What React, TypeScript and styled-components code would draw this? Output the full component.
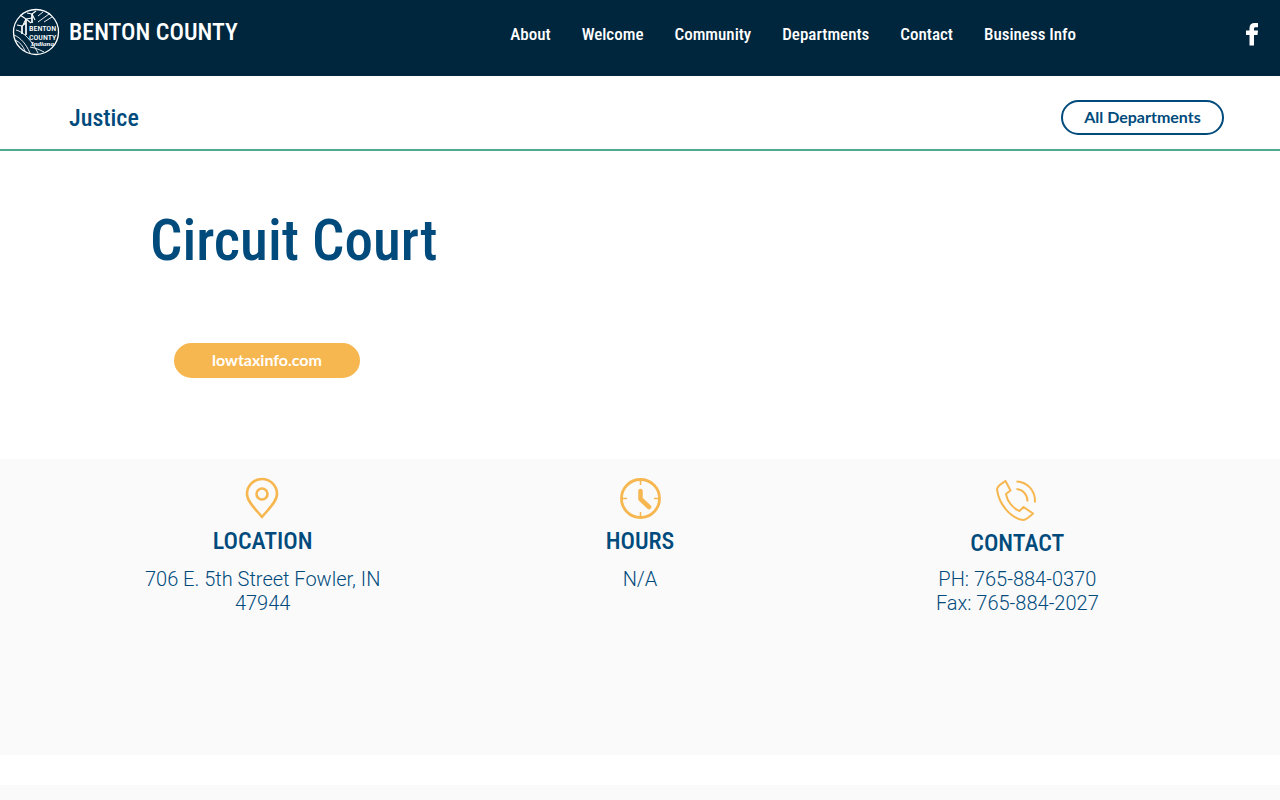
import React from "react";
import styled, { createGlobalStyle } from "styled-components";

const navy = "#00263e";
const blue = "#004b7c";
const amber = "#f7b750";
const condensed = `"Roboto Condensed", "Liberation Sans Narrow", Roboto, sans-serif`;

const GlobalStyle = createGlobalStyle`
  *, *::before, *::after { box-sizing: border-box; }
  body { margin: 0; background: #fff; color: ${blue}; font-family: Roboto, sans-serif; }
  h1, h2, h3, p { margin: 0; }
  a { color: inherit; text-decoration: none; }
`;

const Header = styled.header`
  display: flex;
  align-items: flex-start;
  justify-content: space-between;
  height: 76px;
  padding: 0 20px 0 12px;
  background: ${navy};
  color: #fff;
`;

const Brand = styled.a`
  display: flex;
  align-items: center;
  gap: 9px;
  padding-top: 7px;
  font: 500 24px/50px ${condensed};
  white-space: nowrap;
`;

const NavArea = styled.div`
  display: flex;
  align-items: center;
  gap: 168px;
  height: 68px;
`;

const Nav = styled.nav`
  display: flex;
  gap: 31px;
  font: 500 17px/24px ${condensed};
  white-space: nowrap;
`;

const SocialLink = styled.a`
  display: flex;
`;

const DepartmentBar = styled.div`
  display: flex;
  align-items: center;
  justify-content: space-between;
  height: 75px;
  padding: 10px 56px 0 69px;
  border-bottom: 2px solid #4fa890;
`;

const Category = styled.h2`
  font: 500 24px/36px ${condensed};
`;

const Pill = styled.button<{ $filled?: boolean }>`
  width: ${(p) => (p.$filled ? 186 : 163)}px;
  height: 35px;
  padding: 0 0 2px;
  border: 2px solid ${(p) => (p.$filled ? amber : blue)};
  border-radius: 18px;
  background: ${(p) => (p.$filled ? amber : "#fff")};
  color: ${(p) => (p.$filled ? "#fff" : blue)};
  font: 700 16px/20px Lato, sans-serif;
  cursor: pointer;
`;

const Intro = styled.section`
  display: flex;
  flex-direction: column;
  align-items: flex-start;
  height: 308px;
  padding: 48px 150px 0;
`;

const Title = styled.h1`
  margin-bottom: 60px;
  font: 500 57px/84px ${condensed};
`;

const PillRow = styled.div`
  padding-left: 24px;
`;

const Details = styled.section`
  display: grid;
  grid-template-columns: repeat(3, 1fr);
  height: 296px;
  padding: 18px 74px 0;
  background: #fafafa;
`;

const Detail = styled.article`
  display: flex;
  flex-direction: column;
  align-items: center;
  text-align: center;
`;

const DetailHead = styled.div`
  display: flex;
  flex-direction: column;
  align-items: center;
  gap: 2px;
  height: 90px;
`;

const DetailTitle = styled.h3`
  font: 500 24px/40px ${condensed};
`;

const DetailText = styled.p`
  max-width: 250px;
  font: 300 20px/24px Roboto, sans-serif;
`;

const NextSection = styled.section`
  min-height: 15px;
  margin-top: 30px;
  background: #fafafa;
`;

const SealText = styled.text`
  fill: #fff;
  stroke: none;
  font: 500 8px ${condensed};
`;

const SealScript = styled.text`
  fill: #fff;
  stroke: none;
  font: italic 700 7px "Liberation Serif", serif;
`;

const Seal = () => (
  <svg width="48" height="48" viewBox="0 0 48 48" fill="none" stroke="#fff" aria-hidden="true">
    <circle cx="24" cy="24" r="22.5" strokeWidth="1.3" />
    <path d="M14 11v16M10 18v8M20 6v9" strokeWidth="1.7" />
    <path
      d="M14 11l-6-4M14 11l6-1M14 11l-3 6M10 18l-5-1M10 18l4-3M20 6l-5-1M20 6l4-3M20 6l3 6M14 11l5 4"
      strokeWidth="1.1"
    />
    <path
      d="M26 8l5-4M26 14l11-8M32 14l8-5M2 27c7 3 12 9 16 18M3 32c5 2 8 6 10 11M4 22c8 2 16 11 22 23M18 39c6 1 10 3 14 5"
      strokeWidth="0.9"
    />
    <SealText x="17" y="23">BENTON</SealText>
    <SealText x="17" y="32">COUNTY</SealText>
    <SealScript x="19" y="38">Indiana</SealScript>
  </svg>
);

const FacebookIcon = () => (
  <svg width="16" height="24" viewBox="0 0 16 24" fill="#fff" aria-hidden="true">
    <path d="M5.500 23.500V13H2V8.500h3.500V6C5.500 2.700 7.500 1 10.500 1H14v4.200h-2.200C10.400 5.200 10 5.800 10 7v1.500h4l-.5 4.500H10v10.500z" />
  </svg>
);

const PinIcon = () => (
  <svg width="42" height="42" viewBox="0 0 42 42" fill="none" stroke={amber} strokeWidth="2.600" aria-hidden="true">
    <path d="M20 40C15 33.500 5 25 5 17a15 15 0 0 1 30 0c0 8-10 16.500-15 23z" strokeLinejoin="round" />
    <circle cx="20" cy="17" r="5.500" />
  </svg>
);

const ClockIcon = () => (
  <svg width="42" height="42" viewBox="0 0 42 42" fill="none" stroke={amber} aria-hidden="true">
    <circle cx="21.500" cy="21.500" r="19" strokeWidth="2.800" />
    <path d="M21.500 3v5M21.500 35v5M3 21.500h5M35 21.500h5" strokeWidth="1.500" />
    <path d="M21.500 14v8l8.500 8" strokeWidth="4.500" strokeLinecap="round" strokeLinejoin="round" />
  </svg>
);

const PhoneIcon = () => (
  <svg width="42" height="44" viewBox="0 0 42 44" fill="none" stroke={amber} strokeWidth="2" strokeLinejoin="round" aria-hidden="true">
    <path d="M9.500 4C6 6.500 1 9 1 12.500 3 27 14 41 27 43c3.500 0 7-4 10-6.500L27.500 30l-4 4C16.500 31 11 24 10 17l4.500-3.500z" />
    <path d="M20.500 4.500c11 .5 19 9 18.500 21M20.500 12c6.500.5 11 5.500 11 12.500" />
  </svg>
);

const navItems = ["About", "Welcome", "Community", "Departments", "Contact", "Business Info"];

const details = [
  { title: "LOCATION", icon: <PinIcon />, lines: ["706 E. 5th Street Fowler, IN 47944"] },
  { title: "HOURS", icon: <ClockIcon />, lines: ["N/A"] },
  { title: "CONTACT", icon: <PhoneIcon />, lines: ["PH: 765-884-0370", "Fax: 765-884-2027"] },
];

export default function App() {
  return (
    <>
      <GlobalStyle />
      <Header>
        <Brand href="#home">
          <Seal />
          BENTON COUNTY
        </Brand>
        <NavArea>
          <Nav aria-label="Main">
            {navItems.map((item) => (
              <a key={item} href="#menu">{item}</a>
            ))}
          </Nav>
          <SocialLink href="#facebook" aria-label="Facebook">
            <FacebookIcon />
          </SocialLink>
        </NavArea>
      </Header>
      <main>
        <DepartmentBar>
          <Category>Justice</Category>
          <Pill type="button">All Departments</Pill>
        </DepartmentBar>
        <Intro>
          <Title>Circuit Court</Title>
          <PillRow>
            <Pill type="button" $filled>lowtaxinfo.com</Pill>
          </PillRow>
        </Intro>
        <Details>
          {details.map(({ title, icon, lines }) => (
            <Detail key={title}>
              <DetailHead>
                {icon}
                <DetailTitle>{title}</DetailTitle>
              </DetailHead>
              {lines.map((line) => (
                <DetailText key={line}>{line}</DetailText>
              ))}
            </Detail>
          ))}
        </Details>
        <NextSection />
      </main>
    </>
  );
}
